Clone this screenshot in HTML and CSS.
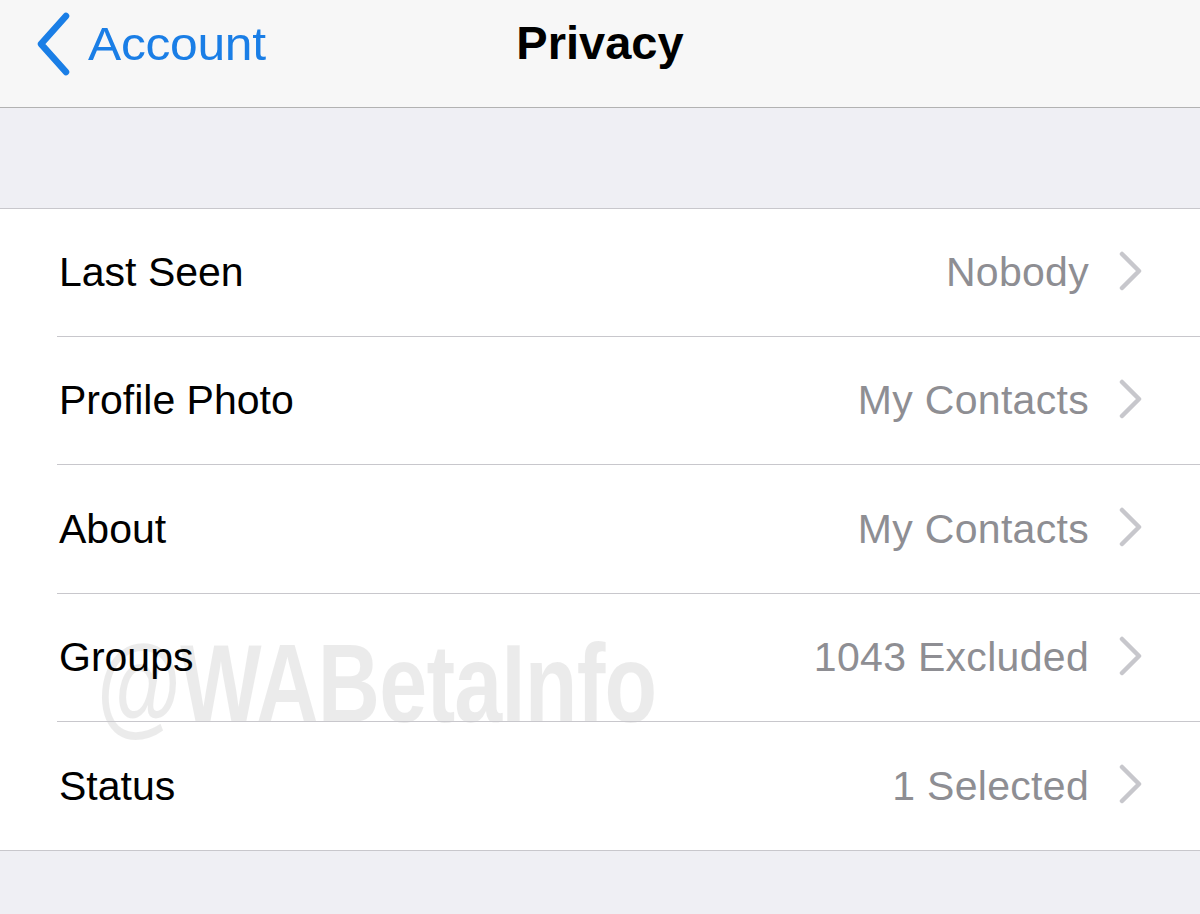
FILE: index.html
```html
<!DOCTYPE html>
<html>
<head>
<meta charset="utf-8">
<link rel="stylesheet" href="styles.css">
</head>
<body>
<div class="screen">
  <header class="nav">
    <div class="back">
      <svg class="back-icon" width="40" height="64" viewBox="0 0 40 64"><path d="M33 4 L8 32 L33 60" fill="none" stroke="#1a7ee6" stroke-width="6.5" stroke-linecap="round" stroke-linejoin="round"/></svg>
      <span class="back-text">Account</span>
    </div>
    <div class="title">Privacy</div>
  </header>
  <div class="gap"></div>
  <div class="list">
    <div class="row"><span class="label">Last Seen</span><span class="value">Nobody</span><svg class="chev" width="26" height="40" viewBox="0 0 26 40"><path d="M4 3 L21 20 L4 37" fill="none" stroke="#c7c7cc" stroke-width="4.5" stroke-linecap="round" stroke-linejoin="round"/></svg></div>
    <div class="row"><span class="label">Profile Photo</span><span class="value">My Contacts</span><svg class="chev" width="26" height="40" viewBox="0 0 26 40"><path d="M4 3 L21 20 L4 37" fill="none" stroke="#c7c7cc" stroke-width="4.5" stroke-linecap="round" stroke-linejoin="round"/></svg></div>
    <div class="row tall"><span class="label">About</span><span class="value">My Contacts</span><svg class="chev" width="26" height="40" viewBox="0 0 26 40"><path d="M4 3 L21 20 L4 37" fill="none" stroke="#c7c7cc" stroke-width="4.5" stroke-linecap="round" stroke-linejoin="round"/></svg></div>
    <div class="row"><span class="label">Groups</span><span class="value">1043 Excluded</span><svg class="chev" width="26" height="40" viewBox="0 0 26 40"><path d="M4 3 L21 20 L4 37" fill="none" stroke="#c7c7cc" stroke-width="4.5" stroke-linecap="round" stroke-linejoin="round"/></svg></div>
    <div class="row tall last"><span class="label">Status</span><span class="value">1 Selected</span><svg class="chev" width="26" height="40" viewBox="0 0 26 40"><path d="M4 3 L21 20 L4 37" fill="none" stroke="#c7c7cc" stroke-width="4.5" stroke-linecap="round" stroke-linejoin="round"/></svg></div>
    <div class="watermark">@WABetaInfo</div>
  </div>
  <div class="bottom"></div>
</div>
</body>
</html>
```
FILE: styles.css
```css
html, body {
  margin: 0;
  padding: 0;
}
body {
  width: 1200px;
  height: 914px;
  overflow: hidden;
  background: #efeff4;
  font-family: "Liberation Sans", Arial, sans-serif;
}
.screen {
  display: flex;
  flex-direction: column;
  height: 914px;
}
.nav {
  height: 107px;
  background: #f7f7f7;
  border-bottom: 1px solid #b2b2b2;
  position: relative;
  display: flex;
  align-items: center;
  flex-shrink: 0;
}
.back {
  display: flex;
  align-items: center;
  padding-left: 33px;
  margin-top: -20px;
}
.back-icon {
  display: block;
}
.back-text {
  color: #1a7ee6;
  font-size: 47px;
  margin-left: 15px;
  letter-spacing: -0.3px;
  transform: scaleX(1.06);
  transform-origin: left center;
}
.title {
  position: absolute;
  left: 0;
  right: 0;
  top: 15px;
  text-align: center;
  font-size: 47px;
  font-weight: bold;
  color: #000;
}
.gap {
  height: 100px;
  border-bottom: 1px solid #c8c7cc;
  flex-shrink: 0;
}
.list {
  background: #fff;
  position: relative;
  border-bottom: 1px solid #c8c7cc;
  flex-shrink: 0;
}
.row {
  height: 127px;
  margin-left: 57px;
  border-bottom: 1px solid #c8c7cc;
  display: flex;
  align-items: center;
  padding-right: 56px;
  position: relative;
  z-index: 1;
}
.row.tall {
  height: 128px;
}
.row.last {
  border-bottom: none;
}
.label {
  font-size: 41px;
  color: #000;
  padding-left: 2px;
  flex: 1;
}
.value {
  font-size: 41px;
  color: #8e8e93;
  margin-right: 29px;
  letter-spacing: 0.3px;
}
.chev {
  display: block;
  margin-top: -4px;
}
.watermark {
  position: absolute;
  left: 97px;
  top: 410px;
  font-size: 112px;
  font-weight: bold;
  color: rgba(0, 0, 0, 0.08);
  transform: scaleX(0.77);
  transform-origin: left top;
  white-space: nowrap;
  letter-spacing: -1px;
  z-index: 0;
}
.bottom {
  flex: 1;
  background: #efeff4;
}
```
